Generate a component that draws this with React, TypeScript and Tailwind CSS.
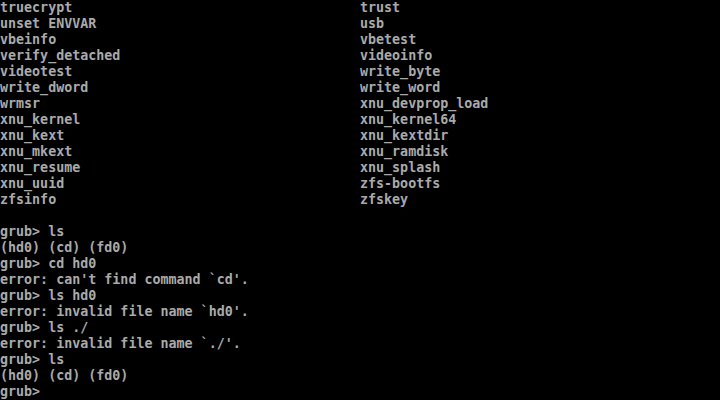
const commandRows: [string, string][] = [
  ['truecrypt', 'trust'],
  ['unset ENVVAR', 'usb'],
  ['vbeinfo', 'vbetest'],
  ['verify_detached', 'videoinfo'],
  ['videotest', 'write_byte'],
  ['write_dword', 'write_word'],
  ['wrmsr', 'xnu_devprop_load'],
  ['xnu_kernel', 'xnu_kernel64'],
  ['xnu_kext', 'xnu_kextdir'],
  ['xnu_mkext', 'xnu_ramdisk'],
  ['xnu_resume', 'xnu_splash'],
  ['xnu_uuid', 'zfs-bootfs'],
  ['zfsinfo', 'zfskey'],
];

const sessionLines = [
  '',
  'grub> ls',
  '(hd0) (cd) (fd0)',
  'grub> cd hd0',
  "error: can't find command `cd'.",
  'grub> ls hd0',
  "error: invalid file name `hd0'.",
  'grub> ls ./',
  "error: invalid file name `./'.",
  'grub> ls',
  '(hd0) (cd) (fd0)',
  'grub>',
];

export default function App() {
  return (
    <div className="w-[720px] h-[400px] overflow-hidden bg-black text-[#aaaaaa] font-['DejaVu_Sans_Mono','Liberation_Mono',monospace] text-[13.33px] font-semibold leading-4">
      <div className="grid grid-cols-[360px_360px]">
        {commandRows.map(([left, right], i) => (
          <div key={i} className="contents">
            <div className="h-4 whitespace-pre">{left}</div>
            <div className="h-4 whitespace-pre">{right}</div>
          </div>
        ))}
      </div>
      {sessionLines.map((line, i) => (
        <div key={i} className="h-4 whitespace-pre">
          {line}
        </div>
      ))}
    </div>
  );
}
